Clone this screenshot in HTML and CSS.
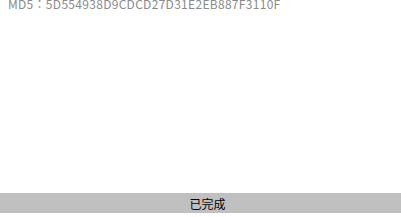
FILE: index.html
```html
<!DOCTYPE html>
<html>
<head>
<meta charset="utf-8">
<link rel="stylesheet" href="styles.css">
</head>
<body>
<div class="page">
  <div class="content">
    <div class="md5">MD5：5D554938D9CDCD27D31E2EB887F3110F</div>
  </div>
  <div class="status">已完成</div>
</div>
</body>
</html>
```
FILE: styles.css
```css
html, body {
  margin: 0;
  padding: 0;
  background: #ffffff;
}
.page {
  width: 401px;
  height: 217px;
  display: flex;
  flex-direction: column;
  overflow: hidden;
}
.content {
  flex: 1;
  padding: 0 0 0 8px;
  margin-top: -4px;
}
.md5 {
  font-family: "Noto Sans CJK TC", "Noto Sans", sans-serif;
  font-size: 12px;
  line-height: 16px;
  letter-spacing: 0.3px;
  color: #8a8a8a;
  white-space: nowrap;
}
.status {
  height: 20px;
  margin-bottom: 4px;
  padding-left: 14px;
  background: #c0c0c0;
  color: #000000;
  font-family: "Noto Sans CJK SC", sans-serif;
  font-size: 12px;
  line-height: 21px;
  text-align: center;
}
```
